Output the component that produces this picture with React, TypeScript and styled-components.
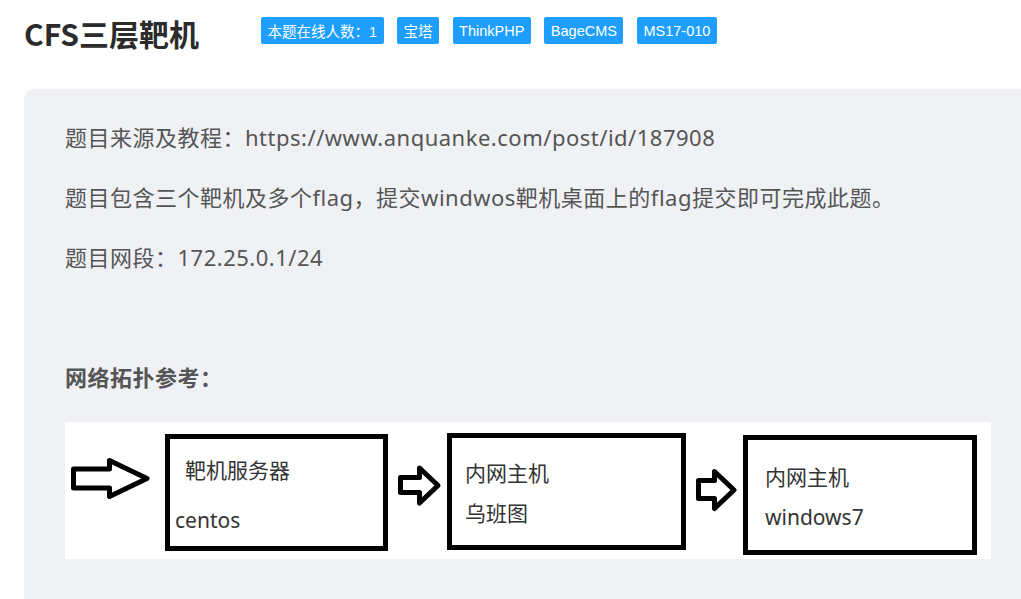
import React from "react";
import styled, { createGlobalStyle } from "styled-components";

const Global = createGlobalStyle`
  html, body {
    margin: 0;
    padding: 0;
    background: #ffffff;
    overflow: hidden;
  }
  body {
    font-family: "Noto Sans", "Noto Sans CJK SC", sans-serif;
  }
`;

const Page = styled.div`
  width: 1021px;
  height: 599px;
  overflow: hidden;
  padding-left: 24px;
  box-sizing: border-box;
`;

const Header = styled.header`
  display: flex;
  align-items: flex-start;
  padding-top: 13px;
`;

const Title = styled.h1`
  margin: 0;
  flex: 0 0 237px;
  font-family: "Noto Sans CJK SC", sans-serif;
  font-weight: 700;
  font-size: 30px;
  line-height: 40px;
  color: #2b2b2b;
`;

const Tags = styled.div`
  display: flex;
  gap: 13.5px;
  margin-top: 4px;
`;

const Tag = styled.span`
  display: inline-flex;
  align-items: center;
  height: 27px;
  padding: 0 6.5px;
  background: #1e9fff;
  color: #ffffff;
  border-radius: 2px;
  font-family: "Liberation Sans", "Noto Sans CJK SC", sans-serif;
  font-size: 14.5px;
  white-space: nowrap;
`;

const Panel = styled.section`
  margin-top: 36px;
  width: 1100px;
  min-height: 600px;
  background: #f0f1f5;
  border-radius: 10px;
  padding: 33px 0 0 41px;
  box-sizing: border-box;
`;

const Para = styled.p<{ $bold?: boolean }>`
  margin: 0 0 30px;
  font-size: 22px;
  line-height: 30px;
  letter-spacing: 0.5px;
  color: #555555;
  font-weight: ${(p) => (p.$bold ? 700 : 400)};
  white-space: nowrap;
`;

const Figure = styled.div`
  width: 926px;
  height: 137px;
  background: #ffffff;
`;

const DiagramText = styled.text`
  font-family: "Noto Sans", "Noto Sans CJK SC", sans-serif;
  font-size: 21px;
  fill: #333333;
`;

const Topology: React.FC = () => (
  <svg width="926" height="137" viewBox="0 0 926 137">
    <g fill="none" stroke="#000" strokeWidth="5" strokeLinejoin="round">
      <path d="M8.5 47 H44.5 V38.5 L82 56.5 L44.5 74.5 V66 H8.5 Z" />
      <rect x="102.5" y="14.5" width="218" height="112" strokeLinejoin="miter" />
      <path d="M335.5 55.5 H354.5 V46 L373 63.5 L354.5 81 V70.5 H335.5 Z" />
      <rect x="384.5" y="13.5" width="234" height="112" strokeLinejoin="miter" />
      <path d="M633.5 58.5 H649.5 V49.5 L669 68 L649.5 86.5 V76.5 H633.5 Z" />
      <rect x="680.5" y="15.5" width="229" height="115" strokeLinejoin="miter" />
    </g>
    <DiagramText x="120" y="56">靶机服务器</DiagramText>
    <DiagramText x="110" y="106">centos</DiagramText>
    <DiagramText x="400" y="59">内网主机</DiagramText>
    <DiagramText x="400" y="99">乌班图</DiagramText>
    <DiagramText x="700" y="63">内网主机</DiagramText>
    <DiagramText x="700" y="103">windows7</DiagramText>
  </svg>
);

const tags = ["本题在线人数：1", "宝塔", "ThinkPHP", "BageCMS", "MS17-010"];

export default function App() {
  return (
    <Page>
      <Global />
      <Header>
        <Title>CFS三层靶机</Title>
        <Tags>
          {tags.map((t) => (
            <Tag key={t}>{t}</Tag>
          ))}
        </Tags>
      </Header>
      <Panel>
        <Para>题目来源及教程：https://www.anquanke.com/post/id/187908</Para>
        <Para>题目包含三个靶机及多个flag，提交windwos靶机桌面上的flag提交即可完成此题。</Para>
        <Para>题目网段：172.25.0.1/24</Para>
        <Para>
          <br />
        </Para>
        <Para $bold>网络拓扑参考：</Para>
        <Figure>
          <Topology />
        </Figure>
      </Panel>
    </Page>
  );
}
